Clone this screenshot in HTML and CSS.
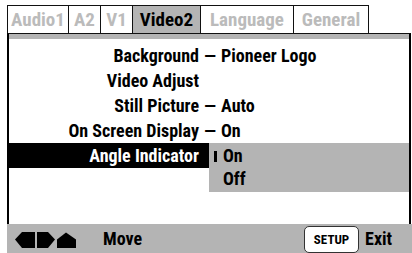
FILE: index.html
```html
<!DOCTYPE html>
<html>
<head>
<meta charset="utf-8">
<link rel="stylesheet" href="styles.css">
</head>
<body>
<div class="screen">
  <div class="tabs">
    <div class="tab t-audio1">Audio1</div>
    <div class="tab t-a2">A2</div>
    <div class="tab t-v1">V1</div>
    <div class="tab t-video2 active">Video2</div>
    <div class="tab t-lang">Language</div>
    <div class="tab t-gen last">General</div>
  </div>
  <div class="panel">
    <div class="band"></div>
    <div class="rows">
      <div class="row"><span class="label">Background</span><span class="sep">—</span><span class="value">Pioneer Logo</span></div>
      <div class="row"><span class="label">Video Adjust</span></div>
      <div class="row"><span class="label">Still Picture</span><span class="sep">—</span><span class="value">Auto</span></div>
      <div class="row"><span class="label">On Screen Display</span><span class="sep">—</span><span class="value">On</span></div>
      <div class="row sel">
        <div class="sel-label">Angle Indicator</div>
        <div class="options">
          <div class="opt current">On</div>
          <div class="opt">Off</div>
        </div>
      </div>
    </div>
  </div>
  <div class="footer">
    <svg class="keys" width="62" height="18" viewBox="0 0 62 18">
      <polygon points="0,8.5 7,1 20,1 20,17 7,17" fill="#000"/>
      <polygon points="22,1 33,1 40,8.5 33,17 22,17" fill="#000"/>
      <polygon points="42,8.5 51,1.5 61,8.5 61,17 42,17" fill="#000"/>
    </svg>
    <span class="move">Move</span>
    <span class="setup">SETUP</span>
    <span class="exit">Exit</span>
  </div>
</div>
</body>
</html>
```
FILE: styles.css
```css
html, body {
  margin: 0;
  padding: 0;
  background: #fff;
}
.screen {
  width: 412px;
  height: 253px;
  overflow: hidden;
  font-family: "Roboto", "Open Sans", sans-serif;
  font-stretch: 75%;
  font-weight: 750;
  font-size: 18px;
  color: #000;
}
.tabs {
  display: flex;
  margin-top: 5px;
  padding-left: 7px;
  height: 28px;
}
.tab {
  box-sizing: border-box;
  height: 28px;
  border-top: 1.5px solid #111;
  border-left: 1.5px solid #111;
  color: #bbb;
  text-align: center;
  line-height: 28px;
  font-size: 19px;
}
.tab.last { border-right: 1.5px solid #111; }
.tab.active { background: #b4b4b4; color: #000; }
.t-audio1 { width: 61px; }
.t-a2 { width: 32px; }
.t-v1 { width: 32px; }
.t-video2 { width: 68px; }
.t-lang { width: 93px; }
.t-gen { width: 76px; }
.panel {
  margin-left: 7px;
  width: 404px;
  height: 191px;
  box-sizing: border-box;
  border-left: 2px solid #000;
  border-right: 2px solid #000;
  border-top: 1.5px solid #111;
}
.band {
  height: 4.5px;
  background: #b4b4b4;
}
.rows {
  padding-top: 4px;
}
.row {
  display: flex;
  height: 25px;
  line-height: 25px;
}
.label {
  width: 190px;
  text-align: right;
}
.sep {
  width: 22px;
  text-align: center;
}
.row.sel {
  height: auto;
  align-items: flex-start;
}
.sel-label {
  width: 190px;
  padding-right: 10px;
  text-align: right;
  background: #000;
  color: #fff;
  height: 25px;
}
.options {
  flex: 1;
  background: #b4b4b4;
  padding-bottom: 3px;
}
.opt {
  position: relative;
  height: 23px;
  line-height: 25px;
  padding-left: 14px;
}
.opt.current::before {
  content: "";
  position: absolute;
  left: 5px;
  top: 8px;
  width: 3px;
  height: 11px;
  background: #000;
}
.footer {
  margin-left: 7px;
  height: 29px;
  background: #b4b4b4;
  display: flex;
  align-items: center;
}
.keys {
  margin-left: 8px;
  margin-top: 2px;
}
.move {
  margin-left: 26px;
}
.setup {
  margin-left: 162px;
  box-sizing: border-box;
  width: 55px;
  height: 27px;
  margin-top: 2px;
  background: #fff;
  border: 1px solid #333;
  border-radius: 5px;
  font-size: 13px;
  line-height: 25px;
  text-align: center;
}
.exit {
  margin-left: 6px;
}
```
